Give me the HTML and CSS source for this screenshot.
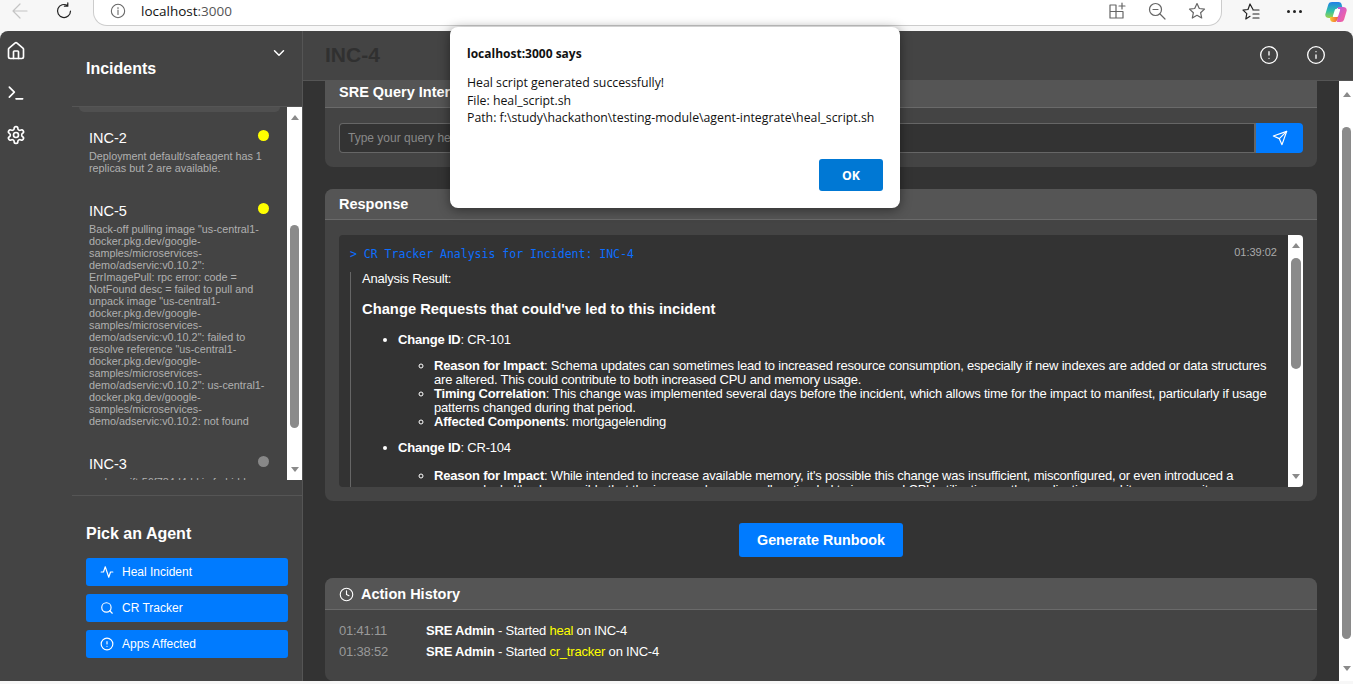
FILE: index.html
```html
<!DOCTYPE HTML>
<html>
  <head>
    <meta charset="utf-8">
    <meta name="viewport" content="width=device-width, initial-scale=1">
    <title>SRE Console</title>
    <link rel="stylesheet" href="styles.css">
  </head>
  <body>
    <header class="browser">
      <svg class="ico back" viewBox="0 0 18 18"><path d="M16 9H2M9 2 2 9l7 7"/></svg>
      <svg class="ico reload" viewBox="0 0 18 18"><path d="M15.5 9A6.5 6.5 0 1 1 12.6 3.6M12.8 .8v3.4H9.4"/></svg>
      <div class="url">
        <svg class="ico url-info" viewBox="0 0 18 18"><circle cx="9" cy="9" r="7.5"/><path d="M9 8v5M9 5v1.2"/></svg>
        <span class="host">localhost<span class="port">:3000</span></span>
        <span class="spacer"></span>
        <svg class="ico tool" viewBox="0 0 18 18"><path d="M8 3H2v13h13v-6M2 9.500h13M8 3v13M14 1v6M11 4h6"/></svg>
        <svg class="ico tool" viewBox="0 0 18 18"><circle cx="7.500" cy="7.500" r="6"/><path d="M5 7.500h5M12 12l5 5"/></svg>
        <svg class="ico tool" viewBox="0 0 18 18"><path d="m9 1.500 2.300 5 5.200.6-3.900 3.600 1.100 5.300L9 13.300 4.300 16l1.100-5.300L1.500 7.100l5.200-.6z"/></svg>
      </div>
      <svg class="ico fav" viewBox="0 0 18 18"><path d="M11 6.500 8 1 6 6.500l-5 .6 3.800 3.500L3.800 16 8 13.300M11 7h6M11 11h6M11 15h6"/></svg>
      <div class="dots"><i></i><i></i><i></i></div>
      <svg class="copilot" viewBox="0 0 22 22">
        <defs>
          <linearGradient id="cpa" x1="0" y1="0" x2="0" y2="1"><stop offset="0" stop-color="#1f7fe8"/><stop offset=".55" stop-color="#2fc0a8"/><stop offset="1" stop-color="#9ed24a"/></linearGradient>
          <linearGradient id="cpb" x1="0" y1="0" x2="1" y2="1"><stop offset="0" stop-color="#b05be0"/><stop offset=".6" stop-color="#e860b0"/><stop offset="1" stop-color="#f0609a"/></linearGradient>
          <linearGradient id="cpc" x1="0" y1="0" x2="1" y2="0"><stop offset="0" stop-color="#f7c92f"/><stop offset="1" stop-color="#f2603c"/></linearGradient>
        </defs>
        <path fill="url(#cpa)" d="M7 1h6.500c1.500 0 2.500.8 3 2l1 4H12L8.500 17H4c-2.500 0-4.200-1.600-3.600-4L3.300 3.500C3.800 1.800 5.200 1 7 1z"/>
        <path fill="url(#cpb)" d="M13 6h5c2.500 0 4.200 1.600 3.600 4l-2.500 8.500c-.5 1.700-2 2.500-3.500 2.500H12z"/>
        <path fill="url(#cpc)" d="M5 16h8l-1 3.200c-.4 1.200-1.200 1.800-2.500 1.800H8c-1.500 0-2.500-1-2.800-2.200z"/>
        <path fill="#fff" d="M11.200 8h3c.8 0 1.100.5.9 1.200l-1.700 5.300c-.3.900-.8 1.500-1.700 1.500h-3c-.7 0-1-.4-.8-1.100l1.800-5.600c.3-.9.800-1.300 1.500-1.300z"/>
      </svg>
    </header>

    <div class="app">
      <nav class="rail">
        <svg class="ico" viewBox="0 0 24 24"><path d="M15 21v-8a1 1 0 0 0-1-1h-4a1 1 0 0 0-1 1v8"/><path d="M3 10a2 2 0 0 1 .709-1.528l7-5.999a2 2 0 0 1 2.582 0l7 5.999A2 2 0 0 1 21 10v9a2 2 0 0 1-2 2H5a2 2 0 0 1-2-2z"/></svg>
        <svg class="ico" viewBox="0 0 24 24"><path d="m4 17 6-6-6-6M12 19h8"/></svg>
        <svg class="ico" viewBox="0 0 24 24"><path d="M12.220 2h-.44a2 2 0 0 0-2 2v.18a2 2 0 0 1-1 1.730l-.43.25a2 2 0 0 1-2 0l-.15-.08a2 2 0 0 0-2.730.73l-.22.38a2 2 0 0 0 .73 2.730l.15.1a2 2 0 0 1 1 1.720v.51a2 2 0 0 1-1 1.740l-.15.09a2 2 0 0 0-.73 2.730l.22.38a2 2 0 0 0 2.730.73l.15-.08a2 2 0 0 1 2 0l.43.25a2 2 0 0 1 1 1.730V20a2 2 0 0 0 2 2h.44a2 2 0 0 0 2-2v-.18a2 2 0 0 1 1-1.730l.43-.25a2 2 0 0 1 2 0l.15.08a2 2 0 0 0 2.730-.73l.22-.39a2 2 0 0 0-.73-2.730l-.15-.08a2 2 0 0 1-1-1.740v-.5a2 2 0 0 1 1-1.740l.15-.09a2 2 0 0 0 .73-2.730l-.22-.38a2 2 0 0 0-2.730-.73l-.15.08a2 2 0 0 1-2 0l-.43-.25a2 2 0 0 1-1-1.730V4a2 2 0 0 0-2-2z"/><circle cx="12" cy="12" r="3"/></svg>
      </nav>

      <aside class="incidents">
        <div class="inc-head">
          <h2>Incidents</h2>
          <svg class="ico chev" viewBox="0 0 24 24"><path d="m6 9 6 6 6-6"/></svg>
        </div>
        <div class="inc-body">
          <div class="inc-list">
            <div class="inc-prev"></div>
            <div class="inc">
              <div class="inc-title"><h4>INC-2</h4><i class="dot yellow"></i></div>
              <p>Deployment default/safeagent has 1 replicas but 2 are available.</p>
            </div>
            <div class="inc">
              <div class="inc-title"><h4>INC-5</h4><i class="dot yellow"></i></div>
              <p>Back-off pulling image "us-central1-docker.pkg.dev/google-samples/microservices-demo/adservic:v0.10.2": ErrImagePull: rpc error: code = NotFound desc = failed to pull and unpack image "us-central1-docker.pkg.dev/google-samples/microservices-demo/adservic:v0.10.2": failed to resolve reference "us-central1-docker.pkg.dev/google-samples/microservices-demo/adservic:v0.10.2": us-central1-docker.pkg.dev/google-samples/microservices-demo/adservic:v0.10.2: not found</p>
            </div>
            <div class="inc">
              <div class="inc-title"><h4>INC-3</h4><i class="dot grey"></i></div>
              <p>node-swift-56f784d4dd is forbidden: exceeded quota</p>
            </div>
          </div>
          <div class="sbar inc-bar"><b class="up"></b><span class="thumb"></span><b class="down"></b></div>
        </div>
        <div class="agents">
          <h2>Pick an Agent</h2>
          <button class="agent"><svg class="ico" viewBox="0 0 24 24"><path d="M22 12h-4l-3 9L9 3l-3 9H2"/></svg>Heal Incident</button>
          <button class="agent"><svg class="ico" viewBox="0 0 24 24"><circle cx="11" cy="11" r="8"/><path d="m21 21-4.300-4.300"/></svg>CR Tracker</button>
          <button class="agent"><svg class="ico" viewBox="0 0 24 24"><circle cx="12" cy="12" r="10"/><path d="M12 8v4M12 16h.01"/></svg>Apps Affected</button>
        </div>
      </aside>

      <main class="main">
        <div class="main-head">
          <h1>INC-4</h1>
          <svg class="ico" viewBox="0 0 24 24"><circle cx="12" cy="12" r="10"/><path d="M12 8v4M12 16h.01"/></svg>
          <svg class="ico" viewBox="0 0 24 24"><circle cx="12" cy="12" r="10"/><path d="M12 16v-4M12 8h.01"/></svg>
        </div>
        <div class="main-body">
          <div class="content">
            <section class="card query">
              <div class="card-head">SRE Query Interface</div>
              <div class="query-body">
                <div class="query-input">Type your query here...</div>
                <button class="send"><svg class="ico" viewBox="0 0 24 24"><path d="m22 2-7 20-4-9-9-4Z"/><path d="M22 2 11 13"/></svg></button>
              </div>
            </section>

            <section class="card response">
              <div class="card-head">Response</div>
              <div class="response-body">
                <div class="terminal">
                  <div class="term-text">
                    <div class="term-top">
                      <span class="prompt">&gt; CR Tracker Analysis for Incident: INC-4</span>
                      <span class="stamp">01:39:02</span>
                    </div>
                    <div class="result">
                      <p>Analysis Result:</p>
                      <h3>Change Requests that could've led to this incident</h3>
                      <ul>
                        <li><b>Change ID</b>: CR-101
                          <ul>
                            <li><b>Reason for Impact</b>: Schema updates can sometimes lead to increased resource consumption, especially if new indexes are added or data structures are altered. This could contribute to both increased CPU and memory usage.</li>
                            <li><b>Timing Correlation</b>: This change was implemented several days before the incident, which allows time for the impact to manifest, particularly if usage patterns changed during that period.</li>
                            <li><b>Affected Components</b>: mortgagelending</li>
                          </ul>
                        </li>
                        <li><b>Change ID</b>: CR-104
                          <ul>
                            <li><b>Reason for Impact</b>: While intended to increase available memory, it's possible this change was insufficient, misconfigured, or even introduced a memory leak. It's also possible that the increased memory allocation led to increased CPU utilization as the application used its new capacity.</li>
                          </ul>
                        </li>
                      </ul>
                    </div>
                  </div>
                  <div class="sbar term-bar"><b class="up"></b><span class="thumb"></span><b class="down"></b></div>
                </div>
              </div>
            </section>

            <div class="runbook"><button class="gen">Generate Runbook</button></div>

            <section class="card history">
              <div class="card-head"><svg class="ico" viewBox="0 0 24 24"><circle cx="12" cy="12" r="10"/><path d="M12 6v6l4 2"/></svg>Action History</div>
              <div class="hist-body">
                <div class="hist-row"><span class="time">01:41:11</span><span><b>SRE Admin</b> - Started <em>heal</em> on INC-4</span></div>
                <div class="hist-row"><span class="time">01:38:52</span><span><b>SRE Admin</b> - Started <em>cr_tracker</em> on INC-4</span></div>
              </div>
            </section>
          </div>
          <div class="sbar page-bar"><b class="up"></b><span class="thumb"></span><b class="down"></b></div>
        </div>
      </main>
    </div>
    <div class="page-foot"></div>

    <div class="alert">
      <h5>localhost:3000 says</h5>
      <p>Heal script generated successfully!<br>File: heal_script.sh<br>Path: f:\study\hackathon\testing-module\agent-integrate\heal_script.sh</p>
      <div class="alert-foot"><button>OK</button></div>
    </div>
  </body>
</html>
```

FILE: styles.css
```css
* { box-sizing: border-box; }
html, body { height: 100%; }
body {
  margin: 0;
  overflow: hidden;
  background: #f7f7f7;
  font-family: "Liberation Sans", Arial, sans-serif;
  font-size: 14px;
  color: #fff;
  display: flex;
  flex-direction: column;
}
button { font-family: inherit; border: 0; cursor: pointer; }
.ico {
  fill: none;
  stroke: currentColor;
  stroke-width: 2;
  stroke-linecap: round;
  stroke-linejoin: round;
  flex: none;
}

/* browser bar */
.browser {
  height: 31px;
  flex: none;
  display: flex;
  align-items: flex-start;
  color: #222;
}
.browser .ico { stroke-width: 1.2; width: 18px; height: 18px; }
.back { margin: 2px 0 0 11px; color: #c4c4c4; }
.reload { margin: 2px 0 0 26px; }
.url {
  width: 1129px;
  height: 27px;
  margin: -1px 0 0 20px;
  padding: 0 15px 3px 16px;
  background: #fff;
  border: 1px solid #ccc;
  border-top: 0;
  border-radius: 0 0 14px 14px;
  display: flex;
  align-items: center;
  gap: 22px;
}
.url .spacer { flex: 1; }
.url .ico { color: #666; }
.url .url-info { margin-right: -7px; width: 16px; height: 16px; }
.host { font-family: "Open Sans", sans-serif; font-size: 13.500px; color: #111; }
.port { color: #555; }
.fav { margin: 3px 0 0 20px; }
.dots { display: flex; gap: 3px; margin: 10px 0 0 27px; }
.dots i { width: 3px; height: 3px; border-radius: 50%; background: #222; }
.copilot { width: 22px; height: 22px; margin: 1px 0 0 23px; }

/* app shell */
.app {
  height: 650px;
  flex: none;
  display: flex;
  background: #444;
  border-radius: 8px 8px 0 0;
  overflow: hidden;
}
.page-foot { flex: 1; }
.rail {
  width: 72px;
  flex: none;
  padding: 10px 0 0 6px;
  display: flex;
  flex-direction: column;
  gap: 22px;
}
.rail .ico { width: 20px; height: 20px; stroke-width: 2; }

/* incidents panel */
.incidents {
  width: 231px;
  flex: none;
  border-right: 1px solid #555;
  display: flex;
  flex-direction: column;
}
.incidents h2 { margin: 0; font-size: 16px; }
.inc-head {
  height: 76px;
  flex: none;
  padding: 29px 14px 0;
  border-bottom: 1px solid #555;
  display: flex;
  justify-content: space-between;
}
.chev { width: 18px; height: 18px; margin: -16px 0 0; }
.inc-body {
  height: 373px;
  flex: none;
  display: flex;
}
.inc-list { flex: 1; overflow: hidden; }
.inc-prev {
  height: 5px;
  margin: 0 7px;
  background: #505050;
  border-radius: 0 0 5px 5px;
}
.inc { padding: 18px 17px 11px; }
.inc-title { display: flex; justify-content: space-between; align-items: flex-start; }
.inc h4 { margin: 0; font-size: 14.500px; font-weight: 400; line-height: 16px; }
.inc p { margin: 4px 0 0; width: 178px; font-size: 10.800px; line-height: 12px; color: #b0b0b0; }
.dot { width: 11px; height: 11px; margin: 0 1px 0 0; border-radius: 50%; }
.yellow { background: #ff0; }
.grey { background: #888; }
.agents {
  flex: 1;
  margin-top: 15px;
  padding: 29px 14px 0;
  border-top: 1px solid #555;
  display: flex;
  flex-direction: column;
  gap: 8px;
}
.agents h2 { margin-bottom: 7px; }
.agent {
  width: 202px;
  height: 28px;
  padding: 0 0 0 14px;
  background: #007bff;
  color: #fff;
  font-size: 12px;
  border-radius: 3px;
  display: flex;
  align-items: center;
  gap: 8px;
}
.agent .ico { width: 14px; height: 14px; }

/* fake scrollbars, the native ones don't show up in the capture */
.sbar {
  flex: none;
  width: 15px;
  background: #fff;
  display: flex;
  flex-direction: column;
  align-items: center;
}
.thumb { width: 9px; background: #8a8a8a; border-radius: 5px; }
.up, .down { width: 0; height: 0; border: 4px solid transparent; border-left-width: 4.500px; border-right-width: 4.500px; }
.up { border-bottom: 5px solid #8a8a8a; border-top: 0; margin-top: 8px; }
.down { border-top: 5px solid #8a8a8a; border-bottom: 0; margin-top: auto; margin-bottom: 8px; }
.inc-bar .thumb { height: 203px; margin-top: 105px; }
.term-bar .thumb { width: 10px; height: 111px; margin-top: 10px; }
.page-bar { width: 14px; padding-left: 1px; }
.page-bar .thumb { height: 512px; margin-top: 30px; }
.page-bar .up { margin-top: 11px; }
.page-bar .down { margin-bottom: 10px; }

/* main column */
.main { flex: 1; display: flex; flex-direction: column; min-width: 0; }
.main-head {
  height: 50px;
  flex: none;
  padding: 0 27px 2px 22px;
  border-bottom: 1px solid #555;
  display: flex;
  align-items: center;
  gap: 27px;
}
.main-head h1 { flex: 1; margin: 0; font-size: 21px; color: #303030; }
.main-head .ico { width: 20px; height: 20px; stroke-width: 1.600; }
.main-body { flex: 1; display: flex; min-height: 0; background: #333; }
.content {
  flex: 1;
  padding: 0 22px;
  display: flex;
  flex-direction: column;
  overflow: hidden;
}
.card { background: #444; border-radius: 8px; flex: none; overflow: hidden; }
.card-head {
  height: 31px;
  padding: 0 14px;
  background: #555;
  border-bottom: 1px solid #6a6a6a;
  font-size: 14.500px;
  font-weight: 700;
  display: flex;
  align-items: center;
  gap: 7px;
}
.card-head .ico { width: 15px; height: 15px; stroke-width: 1.800; }

.query { height: 86px; border-radius: 0 0 8px 8px; }
.query .card-head { height: 27px; padding-bottom: 4px; }
.query-body { padding: 15px 14px 0; display: flex; }
.query-input {
  flex: 1;
  height: 30px;
  padding: 0 8px;
  background: #333;
  border: 1px solid #666;
  border-right-width: 2px;
  border-radius: 4px 0 0 4px;
  color: #888;
  font-size: 12px;
  line-height: 28px;
}
.send {
  width: 47px;
  height: 30px;
  background: #007bff;
  color: #fff;
  border-radius: 0 4px 4px 0;
  display: flex;
  align-items: center;
  justify-content: center;
}
.send .ico { width: 16px; height: 16px; stroke-width: 1.800; }

.response { height: 312px; margin-top: 22px; }
.response-body { padding: 15px 14px 14px; }
.terminal {
  height: 252px;
  background: #333;
  border-radius: 4px;
  display: flex;
  overflow: hidden;
}
.term-text { flex: 1; min-width: 0; padding: 11px 11px 0; overflow: hidden; }
.term-top { display: flex; justify-content: space-between; align-items: center; height: 16px; }
.prompt { font-family: "DejaVu Sans Mono", monospace; font-size: 11.500px; color: #0d6efd; }
.stamp { font-size: 11px; color: #aaa; margin-top: -4px; }
.result {
  margin-top: 10px;
  padding-left: 11px;
  border-left: 1px solid #666;
  font-size: 13px;
  letter-spacing: -.2px;
  line-height: 14px;
}
.result p { margin: 0; }
.result h3 { margin: 15px 0 14px; font-size: 14.750px; letter-spacing: 0; line-height: 17px; }
.result ul { margin: 0; padding-left: 36px; list-style: disc; }
.result ul ul { margin: 12px 0 11px; list-style: circle; }
.result > ul > li { padding-top: 1px; }
.result > ul > li + li ul { margin-top: 14px; }

.runbook { padding: 22px 0 21px; display: flex; justify-content: center; flex: none; }
.gen {
  width: 164px;
  height: 34px;
  background: #007bff;
  color: #fff;
  font-size: 14.300px;
  font-weight: 700;
  border-radius: 3px;
}

.history { flex: none; height: 103px; }
.history .card-head { height: 32px; padding-top: 1px; }
.hist-body { padding: 10px 14px 0; }
.hist-row { display: flex; line-height: 21px; font-size: 13px; letter-spacing: -.2px; }
.time { width: 87px; color: #999; }
.hist-row em { font-style: normal; color: #ff0; }

/* the browser's alert box */
.alert {
  position: absolute;
  left: 450px;
  top: 27px;
  width: 450px;
  height: 181px;
  padding: 18px 17px 0;
  background: #fff;
  color: #111;
  border-radius: 8px;
  box-shadow: 0 2px 12px rgba(0, 0, 0, .45);
  font-family: "Open Sans", sans-serif;
  font-size: 12.300px;
}
.alert h5 { margin: 0; font-size: 12px; font-weight: 700; line-height: 18px; }
.alert p { margin: 11px 0 0; line-height: 17.500px; }
.alert-foot { position: absolute; right: 17px; bottom: 17px; }
.alert button {
  width: 64px;
  height: 32px;
  background: #0078d4;
  color: #fff;
  font-family: inherit;
  font-size: 12.300px;
  font-weight: 700;
  border-radius: 3px;
}
```
